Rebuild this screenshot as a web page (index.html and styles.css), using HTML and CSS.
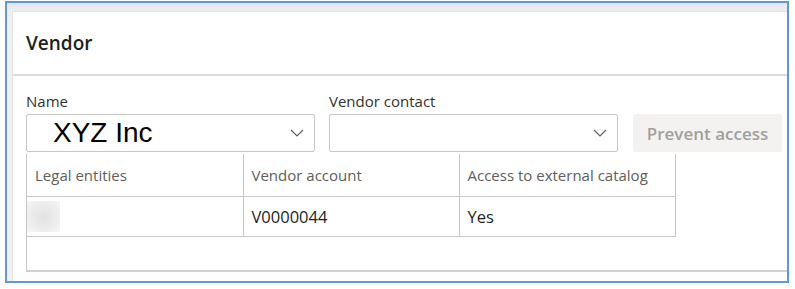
FILE: index.html
```html
<!DOCTYPE html>
<html lang="en">
<head>
    <meta charset="UTF-8">
    <meta name="viewport" content="width=device-width, initial-scale=1.0">
    <title>Vendor</title>
    <link rel="stylesheet" href="styles.css">
</head>
<body>
    <div class="frame">
        <div class="card">
            <div class="card-head">Vendor</div>
            <div class="card-body">
                <div class="fields">
                    <div class="field">
                        <label class="field-label">Name</label>
                        <div class="combo">
                            <span class="combo-value">XYZ Inc</span>
                            <svg class="chevron" width="14" height="8" viewBox="0 0 14 8"><path d="M1 1 L7 7 L13 1" fill="none" stroke="#605e5c" stroke-width="1.2"/></svg>
                        </div>
                    </div>
                    <div class="field">
                        <label class="field-label">Vendor contact</label>
                        <div class="combo">
                            <span class="combo-value"></span>
                            <svg class="chevron" width="14" height="8" viewBox="0 0 14 8"><path d="M1 1 L7 7 L13 1" fill="none" stroke="#605e5c" stroke-width="1.2"/></svg>
                        </div>
                    </div>
                    <button class="btn-disabled" disabled>Prevent access</button>
                </div>
                <div class="grid">
                    <table>
                        <tr>
                            <th>Legal entities</th>
                            <th>Vendor account</th>
                            <th>Access to external catalog</th>
                        </tr>
                        <tr>
                            <td><div class="blurred"></div></td>
                            <td>V0000044</td>
                            <td>Yes</td>
                        </tr>
                    </table>
                </div>
            </div>
        </div>
    </div>
</body>
</html>
```

FILE: styles.css
```css
body {
    margin: 0;
    font-family: 'Open Sans', 'Noto Sans', sans-serif;
    background: #fff;
    color: #201f1e;
}
.frame {
    box-sizing: border-box;
    margin: 1px 0 0 5px;
    width: 784px;
    height: 282px;
    border: 2px solid #5b9bd5;
    background: linear-gradient(#e6e6e6, #f0f0f0 10px);
    padding: 8px 0 0 5px;
    overflow: hidden;
}
.card {
    height: 100%;
    background: #fff;
    border-top: 1px solid #e4e4e4;
    border-left: 1px solid #e4e4e4;
    box-sizing: border-box;
}
.card-head {
    height: 62px;
    line-height: 62px;
    padding-left: 13px;
    font-size: 19px;
    font-weight: 600;
    color: #201f1e;
    border-bottom: 2px solid #dadada;
}
.card-body {
    padding: 15px 0 0 13px;
}
.fields {
    display: flex;
    align-items: flex-end;
    gap: 14px;
}
.field {
    width: 289px;
}
.field-label {
    display: block;
    font-size: 15px;
    line-height: 20px;
    color: #323130;
    margin-bottom: 3px;
}
.combo {
    box-sizing: border-box;
    height: 38px;
    border: 1px solid #c8c6c4;
    border-radius: 2px;
    display: flex;
    align-items: center;
    padding: 0 10px 0 26px;
}
.combo-value {
    flex: 1;
    font-family: 'Liberation Sans', Arial, sans-serif;
    font-size: 28px;
    color: #000;
}
.chevron {
    flex: none;
}
.btn-disabled {
    box-sizing: border-box;
    width: 149px;
    height: 38px;
    margin-left: 1px;
    border: none;
    border-radius: 2px;
    background: #f3f2f1;
    color: #a19f9d;
    font-family: 'Open Sans', 'Noto Sans', sans-serif;
    font-size: 17px;
    font-weight: 600;
}
.grid {
    margin-top: 2px;
    height: 118px;
    box-sizing: border-box;
    border-left: 1px solid #c8c6c4;
    border-bottom: 2px solid #d2d0ce;
}
table {
    border-collapse: collapse;
}
th, td {
    width: 216px;
    text-align: left;
    padding: 0 8px;
    box-sizing: border-box;
    border: 1px solid #c8c6c4;
    border-left: none;
}
th {
    height: 42px;
    font-size: 15px;
    font-weight: normal;
    color: #605e5c;
    border-top: none;
}
td {
    height: 40px;
    font-size: 16.5px;
    color: #201f1e;
}
.blurred {
    width: 33px;
    height: 31px;
    margin-left: -8px;
    background: radial-gradient(#e2e2e2, #efefef 70%, #f6f6f6);
}
```
